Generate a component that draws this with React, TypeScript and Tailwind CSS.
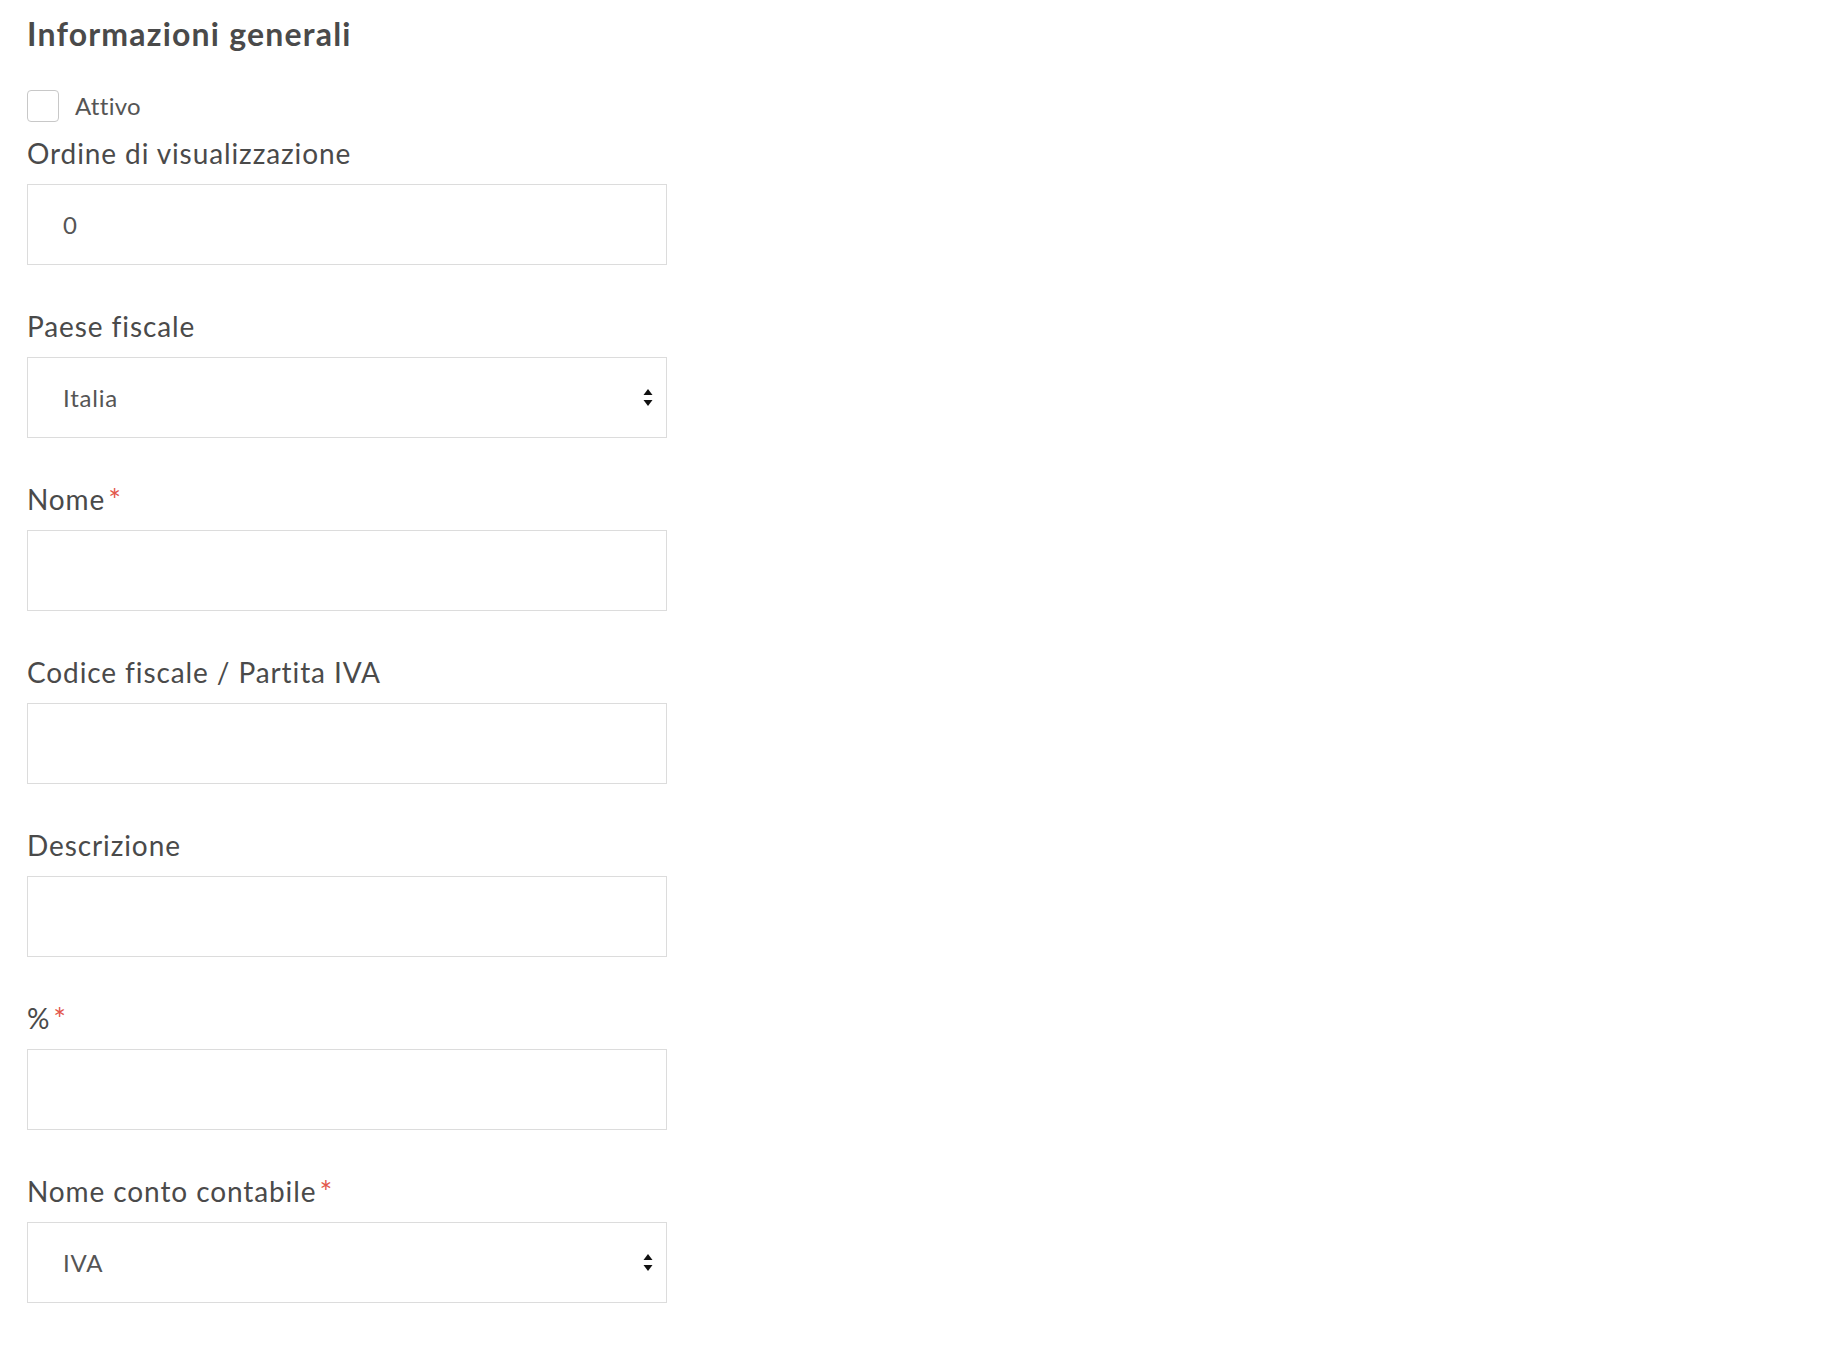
import React from "react";

const font = { fontFamily: "Lato, 'Open Sans', sans-serif" };

function Label({ text, required }: { text: string; required?: boolean }) {
  return (
    <div className="h-[32px] text-[28px] leading-[32px] text-[#4a4a4a] tracking-[0.9px] whitespace-nowrap">
      {text}
      {required && (
        <span className="text-[#e2574c] text-[30px] leading-none ml-[3px] relative top-[1px]">*</span>
      )}
    </div>
  );
}

function Arrows() {
  return (
    <svg width="10" height="20" viewBox="0 0 10 20" className="absolute right-[13px] top-1/2 -translate-y-1/2">
      <polygon points="5,1 9.5,7 0.5,7" fill="#111" />
      <polygon points="0.5,12 9.5,12 5,18" fill="#111" />
    </svg>
  );
}

function Field({
  label,
  required,
  value,
  select,
  first,
}: {
  label: string;
  required?: boolean;
  value?: string;
  select?: boolean;
  first?: boolean;
}) {
  return (
    <div className={first ? "mt-[15px]" : "mt-[45px]"}>
      <Label text={label} required={required} />
      <div className="relative mt-[15px] h-[81px] border border-[#dcdcdc] bg-white flex items-center pl-[35px] text-[24px] text-[#555555] tracking-[0.8px]">
        {value}
        {select && <Arrows />}
      </div>
    </div>
  );
}

export default function App() {
  return (
    <div className="min-h-screen bg-white" style={font}>
      <div className="ml-[27px] w-[640px] pt-[14px]">
        <h1 className="text-[32px] leading-[40px] font-bold text-[#4a4a4a] tracking-[1.2px]">
          Informazioni generali
        </h1>
        <div className="mt-[36px] flex items-center h-[32px]">
          <div className="w-[32px] h-[32px] rounded-[4px] border border-[#c8c8c8] bg-white" />
          <span className="ml-[16px] text-[24px] text-[#555555] tracking-[0.3px]">Attivo</span>
        </div>
        <Field first label="Ordine di visualizzazione" value="0" />
        <Field label="Paese fiscale" value="Italia" select />
        <Field label="Nome" required />
        <Field label="Codice fiscale / Partita IVA" />
        <Field label="Descrizione" />
        <Field label="%" required />
        <Field label="Nome conto contabile" required value="IVA" select />
      </div>
    </div>
  );
}
